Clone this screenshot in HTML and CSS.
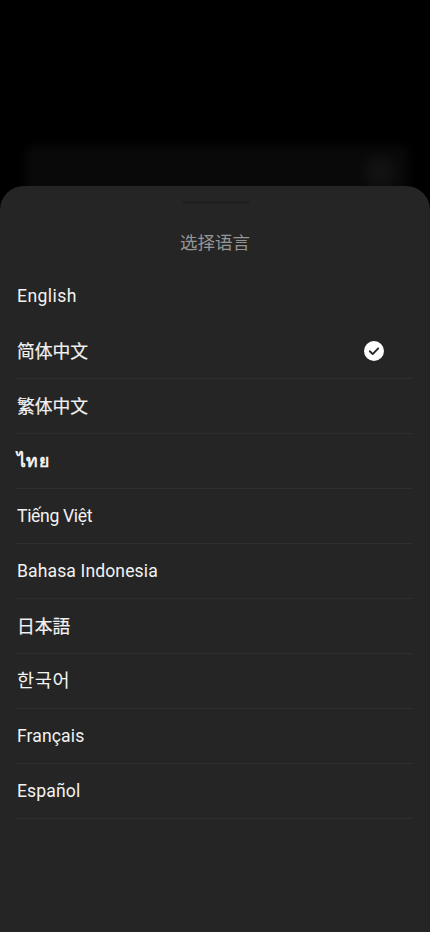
FILE: index.html
```html
<!DOCTYPE html>
<html lang="zh-CN">
<head>
<meta charset="utf-8">
<title>选择语言</title>
<link rel="stylesheet" href="styles.css">
</head>
<body>
<div class="screen">
  <div class="backdrop">
    <div class="ghost-card"><span class="ghost-dot"></span></div>
  </div>
  <section class="sheet">
    <div class="handle"></div>
    <h1 class="title">选择语言</h1>
    <ul class="list">
      <li class="row row-first wide"><span>English</span></li>
      <li class="row cjk"><span lang="zh-CN">简体中文</span>
        <svg class="check" viewBox="0 0 20 20" aria-hidden="true"><circle cx="10" cy="10" r="10" fill="#fff"/><path d="M5.8 10.3l2.9 2.8 5.5-5.7" fill="none" stroke="#262626" stroke-width="1.9" stroke-linecap="round" stroke-linejoin="round"/></svg>
      </li>
      <li class="row cjk"><span lang="zh-TW">繁体中文</span></li>
      <li class="row thai"><span lang="th">ไทย</span></li>
      <li class="row narrow"><span lang="vi">Tiếng Việt</span></li>
      <li class="row"><span>Bahasa Indonesia</span></li>
      <li class="row cjk"><span lang="ja">日本語</span></li>
      <li class="row cjk ko"><span lang="ko">한국어</span></li>
      <li class="row"><span>Français</span></li>
      <li class="row"><span>Español</span></li>
    </ul>
  </section>
</div>
</body>
</html>
```
FILE: styles.css
```css
* { box-sizing: border-box; }
html, body { margin: 0; padding: 0; background: #000; }
body { font-family: "Roboto", "Noto Sans CJK SC", sans-serif; }
.screen { width: 430px; height: 932px; overflow: hidden; display: flex; flex-direction: column; background: #000; }
.backdrop { height: 186px; flex: none; padding: 146px 22px 0 26px; }
.ghost-card { height: 60px; background: #090909; border-radius: 8px; filter: blur(4px); display: flex; justify-content: flex-end; padding: 10px 12px 0 0; }
.ghost-dot { width: 32px; height: 32px; border-radius: 50%; background: #121212; filter: blur(4px); }
.sheet { position: relative; flex: 1; background: #252525; border-radius: 24px 24px 0 0; padding-top: 15px; }
.handle { width: 68px; height: 3px; margin: 0 auto; background: #202020; border-radius: 2px; filter: blur(.6px); transform: translateX(1px); }
.title { margin: 18px 0 0; height: 40px; font-size: 17.5px; line-height: 40px; font-weight: 400; color: #959595; text-align: center; font-family: "Noto Sans CJK SC", sans-serif; }
.list { list-style: none; margin: 7px 0 0; padding: 0 17px 0 15px; }
.row { height: 55px; padding-left: 2px; display: flex; align-items: center; justify-content: space-between; font-size: 17.6px; color: #f2f2f2; border-bottom: 1px solid #2e2e2e; letter-spacing: .1px; }
.row-first { border-bottom-color: transparent; }
.wide { letter-spacing: .4px; }
.narrow { letter-spacing: -.35px; }
.cjk { font-family: "Noto Sans CJK SC", sans-serif; font-size: 17.8px; font-weight: 400; letter-spacing: 0; -webkit-text-stroke: .2px #f2f2f2; }
.cjk span { padding-bottom: 2px; }
.ko { font-size: 18.6px; letter-spacing: .6px; -webkit-text-stroke: 0; }
.ko span { padding-bottom: 6px; }
.thai { font-family: "Noto Sans", "DejaVu Sans", sans-serif; font-weight: 700; letter-spacing: .4px; }
.check { width: 20px; height: 20px; margin-right: 29px; flex: none; }
```
